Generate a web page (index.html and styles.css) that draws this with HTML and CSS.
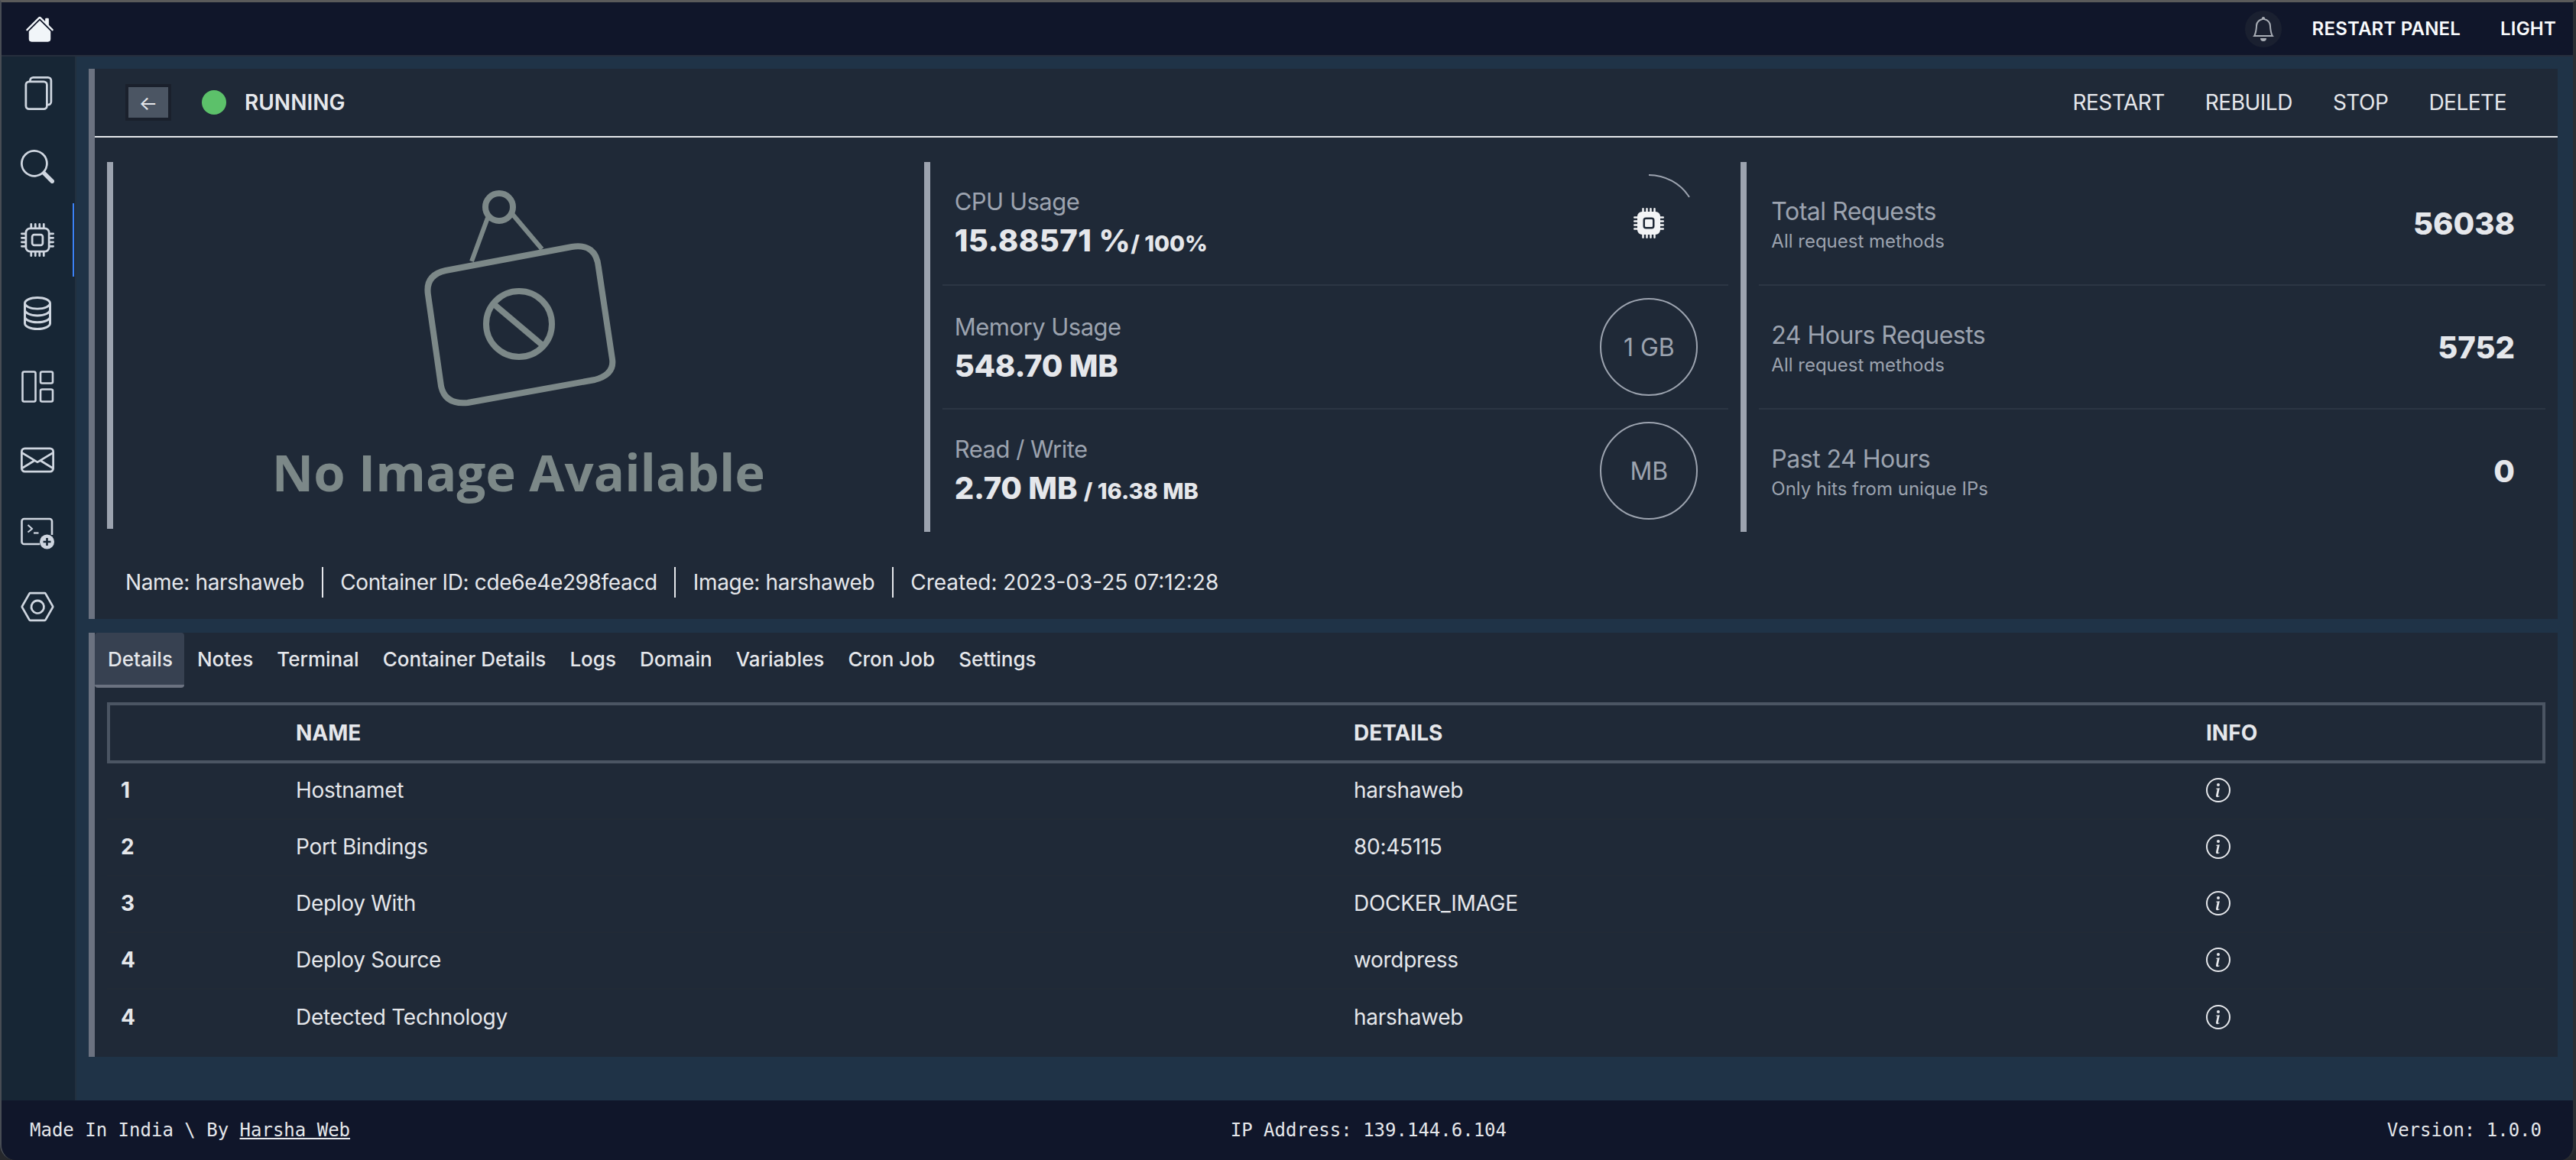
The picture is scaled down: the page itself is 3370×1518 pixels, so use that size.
FILE: index.html
```html
<!DOCTYPE html>
<html lang="en">

<head>
    <meta charset="UTF-8">
    <meta name="viewport" content="width=device-width, initial-scale=1.0">
    <title>Container Details</title>
    <link rel="stylesheet" href="styles.css">
</head>

<body>
    <svg class="defs" width="0" height="0">
        <symbol id="i-info" viewBox="0 0 16 16">
            <path d="M8 15A7 7 0 1 1 8 1a7 7 0 0 1 0 14zm0 1A8 8 0 1 0 8 0a8 8 0 0 0 0 16z" />
            <path d="m8.93 6.588-2.29.287-.082.38.45.083c.294.07.352.176.288.469l-.738 3.468c-.194.897.105 1.319.808 1.319.545 0 1.178-.252 1.465-.598l.088-.416c-.2.176-.492.246-.686.246-.275 0-.375-.193-.304-.533L8.93 6.588zM9 4.5a1 1 0 1 1-2 0 1 1 0 0 1 2 0z" />
        </symbol>
    </svg>

    <div class="window">
        <header class="topbar">
            <a class="home">
                <svg viewBox="0 0 16 16" fill="currentColor">
                    <path d="M8.707 1.5a1 1 0 0 0-1.414 0L.646 8.146a.5.5 0 0 0 .708.708L8 2.207l6.646 6.647a.5.5 0 0 0 .708-.708L13 5.793V2.5a.5.5 0 0 0-.5-.5h-1a.5.5 0 0 0-.5.5v1.293L8.707 1.5Z" />
                    <path d="m8 3.293 6 6V13.5a1.5 1.5 0 0 1-1.5 1.5h-9A1.5 1.5 0 0 1 2 13.5V9.293l6-6Z" />
                </svg>
            </a>
            <div class="topbar-right">
                <span class="bell">
                    <svg viewBox="0 0 16 16" fill="currentColor">
                        <path d="M8 16a2 2 0 0 0 2-2H6a2 2 0 0 0 2 2zM8 1.918l-.797.161A4.002 4.002 0 0 0 4 6c0 .628-.134 2.197-.459 3.742-.16.767-.376 1.566-.663 2.258h10.244c-.287-.692-.502-1.49-.663-2.258C12.134 8.197 12 6.628 12 6a4.002 4.002 0 0 0-3.203-3.92L8 1.917zM14.22 12c.223.447.481.801.78 1H1c.299-.199.557-.553.78-1C2.68 10.2 3 6.88 3 6c0-2.42 1.72-4.44 4.005-4.901a1 1 0 1 1 1.99 0A5.002 5.002 0 0 1 13 6c0 .88.32 4.2 1.22 6z" />
                    </svg>
                </span>
                <a class="topbar-link">RESTART PANEL</a>
                <a class="topbar-link">LIGHT</a>
            </div>
        </header>

        <div class="middle">
            <nav class="sidebar">
                <a class="side-item">
                    <svg viewBox="0 0 16 16" fill="currentColor">
                        <path d="M13 0H6a2 2 0 0 0-2 2 2 2 0 0 0-2 2v10a2 2 0 0 0 2 2h7a2 2 0 0 0 2-2 2 2 0 0 0 2-2V2a2 2 0 0 0-2-2zm0 13V4a2 2 0 0 0-2-2H5a1 1 0 0 1 1-1h7a1 1 0 0 1 1 1v10a1 1 0 0 1-1 1zM3 4a1 1 0 0 1 1-1h7a1 1 0 0 1 1 1v10a1 1 0 0 1-1 1H4a1 1 0 0 1-1-1V4z" />
                    </svg>
                </a>
                <a class="side-item">
                    <svg viewBox="0 0 16 16" fill="currentColor">
                        <path d="M11.742 10.344a6.5 6.5 0 1 0-1.397 1.398h-.001c.03.04.062.078.098.115l3.85 3.85a1 1 0 0 0 1.415-1.414l-3.85-3.85a1.007 1.007 0 0 0-.115-.1zM12 6.5a5.5 5.5 0 1 1-11 0 5.5 5.5 0 0 1 11 0z" />
                    </svg>
                </a>
                <a class="side-item active">
                    <svg viewBox="0 0 16 16" fill="currentColor">
                        <path d="M5 0a.5.5 0 0 1 .5.5V2h1V.5a.5.5 0 0 1 1 0V2h1V.5a.5.5 0 0 1 1 0V2h1V.5a.5.5 0 0 1 1 0V2A2.5 2.5 0 0 1 14 4.5h1.5a.5.5 0 0 1 0 1H14v1h1.5a.5.5 0 0 1 0 1H14v1h1.5a.5.5 0 0 1 0 1H14v1h1.5a.5.5 0 0 1 0 1H14a2.5 2.5 0 0 1-2.5 2.5v1.5a.5.5 0 0 1-1 0V14h-1v1.5a.5.5 0 0 1-1 0V14h-1v1.5a.5.5 0 0 1-1 0V14h-1v1.5a.5.5 0 0 1-1 0V14A2.5 2.5 0 0 1 2 11.5H.5a.5.5 0 0 1 0-1H2v-1H.5a.5.5 0 0 1 0-1H2v-1H.5a.5.5 0 0 1 0-1H2v-1H.5a.5.5 0 0 1 0-1H2A2.5 2.5 0 0 1 4.5 2V.5A.5.5 0 0 1 5 0zm-.5 3A1.5 1.5 0 0 0 3 4.5v7A1.5 1.5 0 0 0 4.5 13h7a1.5 1.5 0 0 0 1.5-1.5v-7A1.5 1.5 0 0 0 11.5 3h-7zM5 6.5A1.5 1.5 0 0 1 6.5 5h3A1.5 1.5 0 0 1 11 6.5v3A1.5 1.5 0 0 1 9.5 11h-3A1.5 1.5 0 0 1 5 9.5v-3zM6.5 6a.5.5 0 0 0-.5.5v3a.5.5 0 0 0 .5.5h3a.5.5 0 0 0 .5-.5v-3a.5.5 0 0 0-.5-.5h-3z" />
                    </svg>
                </a>
                <a class="side-item">
                    <svg class="wide" viewBox="2 1 12 15" fill="currentColor" preserveAspectRatio="none">
                        <path d="M4.318 2.687C5.234 2.271 6.536 2 8 2s2.766.27 3.682.687C12.644 3.125 13 3.627 13 4c0 .374-.356.875-1.318 1.313C10.766 5.729 9.464 6 8 6s-2.766-.27-3.682-.687C3.356 4.875 3 4.373 3 4c0-.374.356-.875 1.318-1.313ZM13 5.698V7c0 .374-.356.875-1.318 1.313C10.766 8.729 9.464 9 8 9s-2.766-.27-3.682-.687C3.356 7.875 3 7.373 3 7V5.698c.271.202.58.378.904.525C4.978 6.711 6.427 7 8 7s3.022-.289 4.096-.777A4.92 4.92 0 0 0 13 5.698ZM14 4c0-1.007-.875-1.755-1.904-2.223C11.022 1.289 9.573 1 8 1s-3.022.289-4.096.777C2.875 2.245 2 2.993 2 4v9c0 1.007.875 1.755 1.904 2.223C4.978 15.71 6.427 16 8 16s3.022-.289 4.096-.777C13.125 14.755 14 14.007 14 13V4Zm-1 4.698V10c0 .374-.356.875-1.318 1.313C10.766 11.729 9.464 12 8 12s-2.766-.27-3.682-.687C3.356 10.875 3 10.373 3 10V8.698c.271.202.58.378.904.525C4.978 9.71 6.427 10 8 10s3.022-.289 4.096-.777A4.92 4.92 0 0 0 13 8.698Zm0 3V13c0 .374-.356.875-1.318 1.313C10.766 14.729 9.464 15 8 15s-2.766-.27-3.682-.687C3.356 13.875 3 13.373 3 13v-1.302c.271.202.58.378.904.525C4.978 12.71 6.427 13 8 13s3.022-.289 4.096-.777c.324-.147.633-.323.904-.525Z" />
                    </svg>
                </a>
                <a class="side-item">
                    <svg viewBox="0 0 44 44" fill="none" stroke="currentColor" stroke-width="2.6">
                        <rect x="2.5" y="2.5" width="17" height="39" rx="2" />
                        <rect x="26" y="2.5" width="16" height="15" rx="2" />
                        <rect x="26" y="25.5" width="16" height="16" rx="2" />
                    </svg>
                </a>
                <a class="side-item">
                    <svg viewBox="0 0 16 16" fill="currentColor">
                        <path d="M0 4a2 2 0 0 1 2-2h12a2 2 0 0 1 2 2v8a2 2 0 0 1-2 2H2a2 2 0 0 1-2-2V4Zm2-1a1 1 0 0 0-1 1v.217l7 4.2 7-4.2V4a1 1 0 0 0-1-1H2Zm13 2.383-4.708 2.825L15 11.105V5.383Zm-.034 6.876-5.64-3.471L8 9.583l-1.326-.795-5.64 3.47A1 1 0 0 0 2 13h12a1 1 0 0 0 .966-.741ZM1 11.105l4.708-2.897L1 5.383v5.722Z" />
                    </svg>
                </a>
                <a class="side-item">
                    <svg viewBox="0 0 44 44" fill="none" stroke="currentColor" stroke-width="2.6">
                        <path d="M25 36H4.500a3 3 0 0 1-3-3V6a3 3 0 0 1 3-3H38a3 3 0 0 1 3 3v18" />
                        <path d="M9.500 11l5.500 5-5.500 4.500" stroke-width="2" />
                        <path d="M17 21.500h6.500" stroke-width="2.200" />
                        <circle cx="34.500" cy="33" r="9.500" fill="currentColor" stroke="none" />
                        <path d="M34.500 28v10M29.500 33h10" stroke="#172635" stroke-width="2.600" />
                    </svg>
                </a>
                <a class="side-item">
                    <svg viewBox="0 0 16 16" fill="currentColor">
                        <path d="m11.420 2 3.428 6-3.428 6H4.580L1.152 8 4.580 2h6.840zM4.580 1a1 1 0 0 0-.868.504l-3.428 6a1 1 0 0 0 0 .992l3.428 6A1 1 0 0 0 4.580 15h6.840a1 1 0 0 0 .868-.504l3.428-6a1 1 0 0 0 0-.992l-3.428-6A1 1 0 0 0 11.420 1H4.580z" />
                        <path d="M6.848 5.933a2.500 2.500 0 1 0 2.500 4.330 2.500 2.500 0 0 0-2.500-4.330zm-1.780 3.915a3.500 3.500 0 1 1 6.061-3.500 3.500 3.500 0 0 1-6.062 3.500z" />
                    </svg>
                </a>
            </nav>

            <main class="content">
                <section class="panel overview">
                    <div class="panel-head">
                        <div class="status">
                            <button class="back">←</button>
                            <span class="dot"></span>
                            <span class="status-text">RUNNING</span>
                        </div>
                        <div class="actions">
                            <a>RESTART</a>
                            <a>REBUILD</a>
                            <a>STOP</a>
                            <a>DELETE</a>
                        </div>
                    </div>

                    <div class="stats">
                        <div class="stat-col image-col">
                            <svg class="no-image" viewBox="540 240 280 300" fill="none" stroke="#7c8888" stroke-width="8">
                                <circle cx="653" cy="271" r="18" />
                                <path d="M638 285 617 342M671 281 709 326" stroke-width="6" />
                                <path d="M583 354 748 323Q780 318 783 350L801 470Q804 490 778 497L612 527Q582 530 577 505L560 386Q556 360 583 354Z" />
                                <circle cx="679" cy="424" r="43" />
                                <path d="M646 398 710 452" />
                            </svg>
                            <div class="no-image-text">No Image Available</div>
                        </div>

                        <div class="stat-col">
                            <div class="stat-row">
                                <div class="usage">
                                    <div class="stat-label">CPU Usage</div>
                                    <div class="stat-value cpu">15.88571 %<small>/ 100%</small></div>
                                </div>
                                <div class="gauge">
                                    <svg class="gauge-arc" viewBox="0 0 128 128">
                                        <path d="M64 1A63 63 0 0 1 117 30" fill="none" stroke="#9ca3af" stroke-width="2" />
                                    </svg>
                                    <svg class="chip" viewBox="0 0 16 16" fill="currentColor">
                                        <path d="M6.500 6a.500.500 0 0 0-.500.500v3a.500.500 0 0 0 .500.500h3a.500.500 0 0 0 .500-.500v-3a.500.500 0 0 0-.500-.500h-3z" />
                                        <path d="M5.500.500a.500.500 0 0 0-1 0V2A2.500 2.500 0 0 0 2 4.500H.500a.500.500 0 0 0 0 1H2v1H.500a.500.500 0 0 0 0 1H2v1H.500a.500.500 0 0 0 0 1H2v1H.500a.500.500 0 0 0 0 1H2A2.500 2.500 0 0 0 4.500 14v1.500a.500.500 0 0 0 1 0V14h1v1.500a.500.500 0 0 0 1 0V14h1v1.500a.500.500 0 0 0 1 0V14h1v1.500a.500.500 0 0 0 1 0V14a2.500 2.500 0 0 0 2.500-2.500h1.500a.500.500 0 0 0 0-1H14v-1h1.500a.500.500 0 0 0 0-1H14v-1h1.500a.500.500 0 0 0 0-1H14v-1h1.500a.500.500 0 0 0 0-1H14A2.500 2.500 0 0 0 11.500 2V.500a.500.500 0 0 0-1 0V2h-1V.500a.500.500 0 0 0-1 0V2h-1V.500a.500.500 0 0 0-1 0V2h-1V.500zm1 4.500h3A1.500 1.500 0 0 1 11 6.500v3A1.500 1.500 0 0 1 9.500 11h-3A1.500 1.500 0 0 1 5 9.500v-3A1.500 1.500 0 0 1 6.500 5z" />
                                    </svg>
                                </div>
                            </div>
                            <div class="stat-row">
                                <div class="usage">
                                    <div class="stat-label">Memory Usage</div>
                                    <div class="stat-value">548.70 MB</div>
                                </div>
                                <div class="gauge circle">1 GB</div>
                            </div>
                            <div class="stat-row">
                                <div class="usage">
                                    <div class="stat-label">Read / Write</div>
                                    <div class="stat-value">2.70 MB <small>/ 16.38 MB</small></div>
                                </div>
                                <div class="gauge circle">MB</div>
                            </div>
                        </div>

                        <div class="stat-col">
                            <div class="stat-row">
                                <div class="requests">
                                    <div class="stat-label">Total Requests</div>
                                    <div class="stat-sub">All request methods</div>
                                </div>
                                <div class="stat-count">56038</div>
                            </div>
                            <div class="stat-row">
                                <div class="requests">
                                    <div class="stat-label">24 Hours Requests</div>
                                    <div class="stat-sub">All request methods</div>
                                </div>
                                <div class="stat-count">5752</div>
                            </div>
                            <div class="stat-row">
                                <div class="requests">
                                    <div class="stat-label">Past 24 Hours</div>
                                    <div class="stat-sub">Only hits from unique IPs</div>
                                </div>
                                <div class="stat-count">0</div>
                            </div>
                        </div>
                    </div>

                    <div class="meta">
                        <span>Name: harshaweb</span>
                        <span>Container ID: cde6e4e298feacd</span>
                        <span>Image: harshaweb</span>
                        <span>Created: 2023-03-25 07:12:28</span>
                    </div>
                </section>

                <section class="panel details">
                    <div class="tabs">
                        <a class="tab active">Details</a>
                        <a class="tab">Notes</a>
                        <a class="tab">Terminal</a>
                        <a class="tab">Container Details</a>
                        <a class="tab">Logs</a>
                        <a class="tab">Domain</a>
                        <a class="tab">Variables</a>
                        <a class="tab">Cron Job</a>
                        <a class="tab">Settings</a>
                    </div>

                    <div class="table">
                        <div class="table-row table-head">
                            <span></span>
                            <span>NAME</span>
                            <span>DETAILS</span>
                            <span>INFO</span>
                        </div>
                        <div class="table-row">
                            <b>1</b>
                            <span>Hostnamet</span>
                            <span>harshaweb</span>
                            <svg class="info" fill="currentColor"><use href="#i-info" /></svg>
                        </div>
                        <div class="table-row">
                            <b>2</b>
                            <span>Port Bindings</span>
                            <span>80:45115</span>
                            <svg class="info" fill="currentColor"><use href="#i-info" /></svg>
                        </div>
                        <div class="table-row">
                            <b>3</b>
                            <span>Deploy With</span>
                            <span>DOCKER_IMAGE</span>
                            <svg class="info" fill="currentColor"><use href="#i-info" /></svg>
                        </div>
                        <div class="table-row">
                            <b>4</b>
                            <span>Deploy Source</span>
                            <span>wordpress</span>
                            <svg class="info" fill="currentColor"><use href="#i-info" /></svg>
                        </div>
                        <div class="table-row">
                            <b>4</b>
                            <span>Detected Technology</span>
                            <span>harshaweb</span>
                            <svg class="info" fill="currentColor"><use href="#i-info" /></svg>
                        </div>
                    </div>
                </section>
            </main>
        </div>

        <footer class="footer">
            <span>Made In India \ By <a class="footer-link">Harsha Web</a></span>
            <span>IP Address: 139.144.6.104</span>
            <span>Version: 1.0.0</span>
        </footer>
    </div>
</body>

</html>
```

FILE: styles.css
```css
* {
    box-sizing: border-box;
}

body {
    margin: 0;
    background-color: #26282c;
    font-family: Inter, "Noto Sans", sans-serif;
    color: #e5e7eb;
}

.defs {
    position: absolute;
}

.window {
    width: 3370px;
    height: 1518px;
    display: flex;
    flex-direction: column;
    overflow: hidden;
    border-top: 3px solid #5a5a5a;
    border-left: 2px solid #474c54;
    border-right: 4px solid #2b2e33;
    border-radius: 0 0 20px 20px;
}

.topbar {
    height: 71px;
    flex-shrink: 0;
    display: flex;
    align-items: center;
    justify-content: space-between;
    background: #10162a;
    border-bottom: 2px solid #262e3d;
    padding: 0 22px 0 31px;
}

.home svg {
    display: block;
    width: 38px;
    height: 38px;
    color: #f1f5f9;
}

.topbar-right {
    display: flex;
    align-items: center;
    gap: 52px;
}

.bell {
    width: 48px;
    height: 48px;
    margin-right: -12px;
    border-radius: 50%;
    background: #1a2030;
    color: #a8adb5;
    display: flex;
    align-items: center;
    justify-content: center;
}

.bell svg {
    width: 32px;
    height: 32px;
}

.topbar-link {
    font-size: 24px;
    font-weight: 600;
    letter-spacing: 0.2px;
    color: #f8fafc;
}

.middle {
    flex: 1;
    display: flex;
    min-height: 0;
}

.sidebar {
    width: 98px;
    flex-shrink: 0;
    background: #172635;
    border-right: 2px solid #22303f;
}

.side-item {
    height: 96px;
    width: 95px;
    display: flex;
    align-items: center;
    justify-content: center;
    color: #cfd6e0;
    border-right: 2px solid transparent;
}

.side-item.active {
    border-right-color: #3b82f6;
}

.side-item svg {
    width: 44px;
    height: 44px;
}

.side-item svg.wide {
    width: 36px;
}

.content {
    flex: 1;
    min-width: 0;
    padding: 16px 20px 0 16px;
    background: #1f3347;
}

.panel {
    background: #1f2937;
    border-left: 8px solid #6b7280;
}

.overview {
    height: 720px;
    margin-bottom: 18px;
}

.panel-head {
    height: 90px;
    display: flex;
    align-items: center;
    justify-content: space-between;
    border-bottom: 2px solid #e5e7eb;
    padding: 0 67px 0 40px;
}

.status {
    display: flex;
    align-items: center;
}

.back {
    width: 60px;
    height: 48px;
    padding: 0;
    background: #4b5563;
    border: 4px solid #1a202c;
    color: #e5e7eb;
    font-family: Inter, sans-serif;
    font-size: 26px;
}

.dot {
    width: 32px;
    height: 32px;
    margin-left: 40px;
    border-radius: 50%;
    background: #5cc16a;
}

.status-text {
    margin-left: 24px;
    font-size: 28px;
    font-weight: 600;
}

.actions {
    display: flex;
    gap: 53px;
    font-size: 28px;
    font-weight: 400;
    letter-spacing: -0.5px;
}

.stats {
    display: grid;
    grid-template-columns: repeat(3, 1fr);
    height: 484px;
    margin-top: 32px;
    padding-left: 16px;
}

.stat-col {
    border-left: 8px solid #9ca3af;
    display: flex;
    flex-direction: column;
    padding-left: 16px;
}

.stat-row {
    flex: 1;
    display: flex;
    align-items: center;
    justify-content: space-between;
    padding: 0 40px 0 16px;
    margin-right: 16px;
    border-bottom: 2px solid #2c3644;
}

.stat-row:last-child {
    border-bottom: none;
}

.usage {
    padding-top: 2px;
}

.requests {
    padding-top: 4px;
}

.image-col {
    align-items: center;
    height: 480px;
    padding: 28px 0 0;
}

.no-image {
    width: 280px;
    height: 300px;
    margin-left: 4px;
    flex-shrink: 0;
}

.no-image-text {
    margin-top: 29px;
    font-family: "Open Sans", sans-serif;
    font-size: 67px;
    font-weight: 700;
    line-height: 96px;
    color: #7c8888;
    white-space: nowrap;
}

.stat-label {
    font-size: 32px;
    line-height: 40px;
    letter-spacing: -0.5px;
    color: #9ca3af;
}

.usage .stat-label {
    font-size: 31px;
}

.stat-value {
    margin-top: 7px;
    font-size: 40px;
    line-height: 48px;
    font-weight: 800;
    letter-spacing: -0.2px;
}

.stat-value.cpu {
    letter-spacing: 0.45px;
}

.stat-value small {
    font-size: 29px;
    letter-spacing: 0;
}

.stat-sub {
    margin-top: 3px;
    font-size: 24px;
    line-height: 32px;
    color: #9ca3af;
}

.stat-count {
    font-size: 40px;
    font-weight: 800;
}

.gauge {
    position: relative;
    width: 128px;
    height: 128px;
    flex-shrink: 0;
    display: flex;
    align-items: center;
    justify-content: center;
    font-size: 32px;
    color: #9ca3af;
}

.gauge.circle {
    border: 2px solid #9ca3af;
    border-radius: 50%;
}

.gauge-arc {
    position: absolute;
    inset: 0;
}

.chip {
    width: 40px;
    height: 40px;
    color: #f3f4f6;
}

.meta {
    display: flex;
    align-items: center;
    margin-top: 46px;
    padding-left: 40px;
    font-size: 28px;
    letter-spacing: -0.35px;
}

.meta span {
    line-height: 40px;
    padding: 0 22.5px;
    border-left: 2px solid #e5e7eb;
}

.meta span:first-child {
    padding-left: 0;
    border-left: none;
}

.meta span:last-child {
    letter-spacing: 0;
}

.details {
    height: 555px;
}

.tabs {
    display: flex;
    height: 72px;
    font-size: 26px;
    font-weight: 500;
}

.tab {
    display: flex;
    align-items: center;
    padding: 0 14.2px 0 17px;
    border-bottom: 4px solid transparent;
}

.tab.active {
    padding-right: 15px;
    background: #374151;
    border-bottom-color: #6b7280;
    border-radius: 4px;
}

.table {
    margin: 19px 16px 0 16px;
    font-size: 28px;
    letter-spacing: -0.3px;
}

.table-row {
    display: grid;
    grid-template-columns: 229px 1384px 1115px 1fr;
    align-items: center;
    height: 74px;
    padding-bottom: 2px;
    border-bottom: 2px solid #212a36;
}

.table-row > * {
    margin-left: 18px;
}

.table-row:last-child {
    border-bottom: none;
}

.table-head {
    height: 80px;
    padding-bottom: 0;
    font-weight: 700;
    letter-spacing: 0;
    border: none;
    box-shadow: inset 0 0 0 4px #4b5563;
}

.info {
    width: 32px;
    height: 32px;
    color: #e5e7eb;
}

.footer {
    height: 78px;
    flex-shrink: 0;
    display: flex;
    align-items: center;
    justify-content: space-between;
    background: #10162a;
    padding: 0 41px 0 37px;
    font-family: "DejaVu Sans Mono", monospace;
    font-size: 24px;
}

.footer-link {
    text-decoration: underline;
}
```
